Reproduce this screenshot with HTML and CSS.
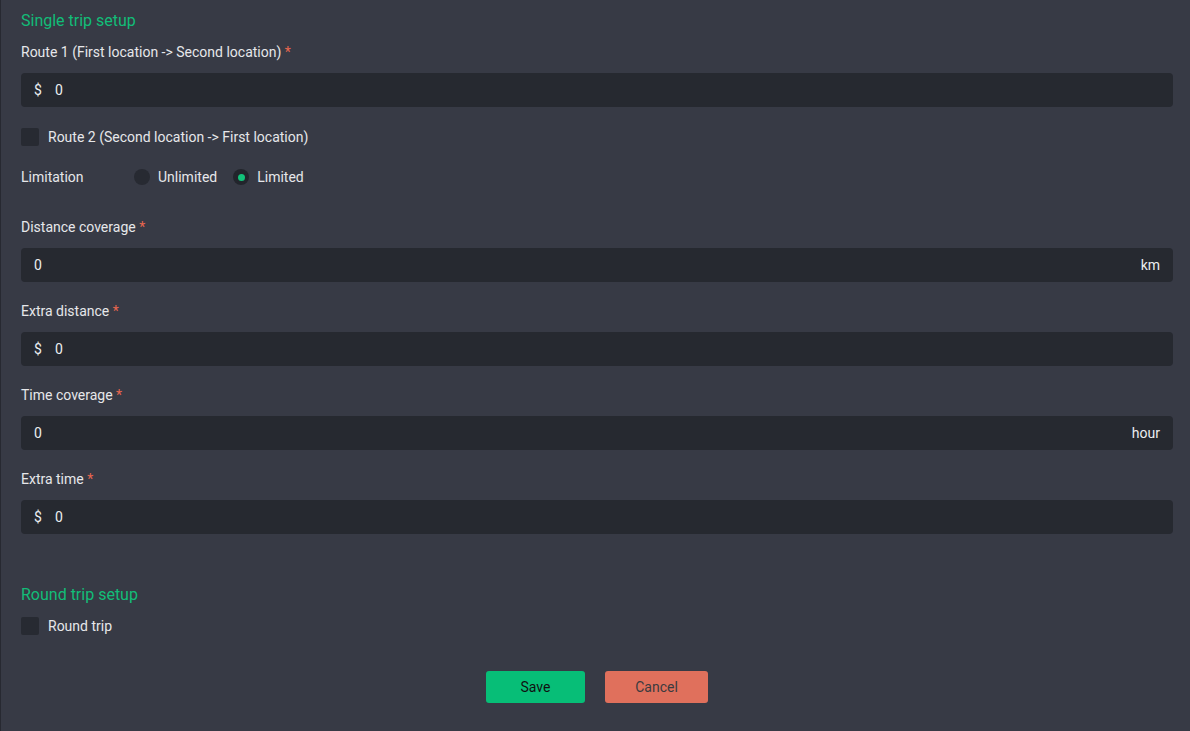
FILE: index.html
```html
<!DOCTYPE html>
<html>
<head>
<meta charset="utf-8">
<link rel="stylesheet" href="styles.css">
</head>
<body>
<div class="panel">
  <h2 class="section-title">Single trip setup</h2>
  <div class="field">
    <div class="label">Route 1 (First location -&gt; Second location) <span class="req">*</span></div>
    <div class="input"><span class="prefix">$</span><span class="value">0</span></div>
  </div>
  <label class="check-row route2">
    <span class="checkbox"></span><span>Route 2 (Second location -&gt; First location)</span>
  </label>
  <div class="limit-row">
    <span class="limit-label">Limitation</span>
    <span class="radio-opt"><span class="radio"></span>Unlimited</span>
    <span class="radio-opt"><span class="radio on"><span class="dot"></span></span>Limited</span>
  </div>
  <div class="field">
    <div class="label">Distance coverage <span class="req">*</span></div>
    <div class="input"><span class="value">0</span><span class="suffix">km</span></div>
  </div>
  <div class="field">
    <div class="label">Extra distance <span class="req">*</span></div>
    <div class="input"><span class="prefix">$</span><span class="value">0</span></div>
  </div>
  <div class="field">
    <div class="label">Time coverage <span class="req">*</span></div>
    <div class="input"><span class="value">0</span><span class="suffix">hour</span></div>
  </div>
  <div class="field">
    <div class="label">Extra time <span class="req">*</span></div>
    <div class="input"><span class="prefix">$</span><span class="value">0</span></div>
  </div>
  <h2 class="section-title round">Round trip setup</h2>
  <label class="check-row round-row">
    <span class="checkbox"></span><span>Round trip</span>
  </label>
  <div class="actions">
    <button class="btn save">Save</button>
    <button class="btn cancel">Cancel</button>
  </div>
</div>
</body>
</html>
```

FILE: styles.css
```css
html, body {
  margin: 0;
  padding: 0;
  background: #373a45;
  height: 100%;
}
body {
  font-family: Roboto, "Liberation Sans", sans-serif;
  font-size: 14px;
  color: #e6e7ea;
}
.panel {
  box-sizing: border-box;
  min-height: 731px;
  border-left: 1px solid #272931;
  padding: 11px 17px 0 20px;
}
.section-title {
  margin: 0;
  font-size: 16px;
  font-weight: 400;
  line-height: 20px;
  color: #12bd78;
}
.section-title.round {
  margin-top: 51px;
}
.field {
  margin-bottom: 18px;
}
.section-title + .field {
  margin-top: 10px;
}
.label {
  line-height: 22px;
  margin-bottom: 10px;
}
.req {
  color: #e8664f;
}
.input {
  height: 34px;
  box-sizing: border-box;
  background: #262930;
  border-radius: 4px;
  display: flex;
  align-items: center;
  padding: 0 13px;
  color: #eceef0;
}
.prefix {
  margin-right: 13px;
}
.value {
  flex: 1;
}
.check-row {
  display: flex;
  align-items: center;
  gap: 9px;
  height: 18px;
  line-height: 18px;
}
.route2 {
  margin-top: 21px;
}
.round-row {
  margin-top: 12px;
}
.checkbox {
  width: 18px;
  height: 18px;
  border-radius: 2px;
  background: #272a32;
  display: inline-block;
}
.limit-row {
  display: flex;
  align-items: center;
  height: 20px;
  margin-top: 21px;
  margin-bottom: 29px;
}
.limit-label {
  width: 113px;
}
.radio-opt {
  display: inline-flex;
  align-items: center;
  gap: 8px;
  margin-right: 16px;
}
.radio {
  width: 16px;
  height: 16px;
  border-radius: 50%;
  background: #272a32;
  display: inline-flex;
  align-items: center;
  justify-content: center;
}
.radio.on {
  background: #22252c;
}
.dot {
  width: 7px;
  height: 7px;
  border-radius: 50%;
  background: #12c27a;
}
.actions {
  display: flex;
  justify-content: center;
  gap: 20px;
  margin-top: 36px;
}
.btn {
  height: 32px;
  border: none;
  border-radius: 3px;
  font-family: Roboto, "Liberation Sans", sans-serif;
  font-size: 14px;
  cursor: pointer;
}
.save {
  width: 99px;
  background: #07be77;
  color: #111;
}
.cancel {
  width: 103px;
  background: #e0705c;
  color: #3b3b3f;
}
```
